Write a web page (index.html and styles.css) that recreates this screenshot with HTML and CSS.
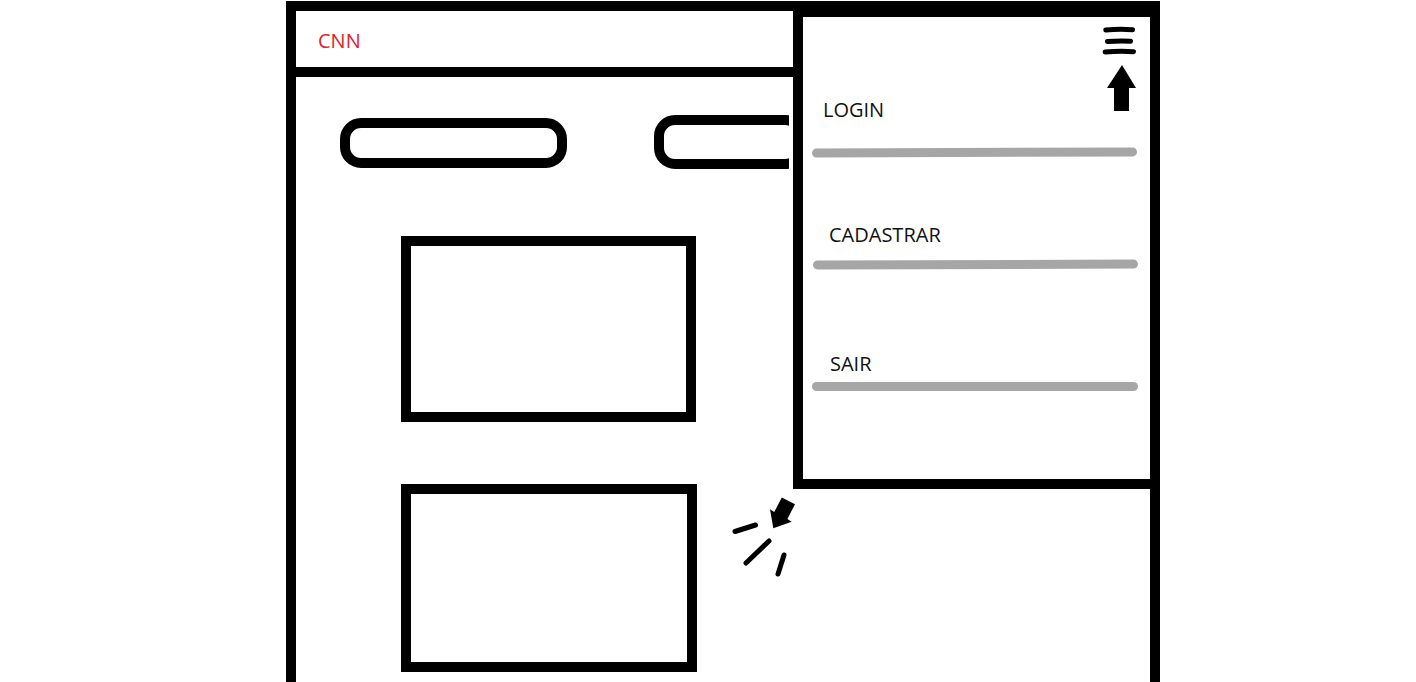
FILE: index.html
```html
<!DOCTYPE html>
<html lang="pt">
<head>
<meta charset="utf-8">
<title>Wireframe</title>
<link rel="stylesheet" href="styles.css">
</head>
<body>
  <div class="frame">
    <header class="topbar"><span class="brand">CNN</span></header>
    <main class="content">
      <div class="pill-row">
        <div class="pill pill-a"></div>
        <div class="pill-clip"><div class="pill pill-b"></div></div>
      </div>
      <div class="box box-a"></div>
      <div class="box box-b"></div>
    </main>
  </div>

  <aside class="menu">
    <svg class="menu-icon" width="36" height="88" viewBox="0 0 36 88">
      <g fill="none" stroke="#000" stroke-width="5" stroke-linecap="round">
        <path d="M3.8 5 Q18 3.8 30.5 4.8"/>
        <path d="M5.5 16.6 Q18 15.4 28.5 16.2"/>
        <path d="M3.2 27 Q18 25.8 31.5 26.7"/>
      </g>
      <polygon points="20,40 34,63 27,63 27,86 12,86 12,63 5,63" fill="#000"/>
    </svg>
    <div class="menu-item item-login">
      <div class="menu-label">LOGIN</div>
      <div class="menu-rule"></div>
    </div>
    <div class="menu-item item-cad">
      <div class="menu-label">CADASTRAR</div>
      <div class="menu-rule"></div>
    </div>
    <div class="menu-item item-sair">
      <div class="menu-label">SAIR</div>
      <div class="menu-rule"></div>
    </div>
  </aside>

  <svg class="burst" width="75" height="90" viewBox="0 0 75 90">
    <polygon points="56.8,2.4 70,9.2 62.4,23.9 66.7,26.7 48.3,33.3 45,14.3 49.2,17.1" fill="#000"/>
    <g fill="none" stroke="#000" stroke-width="5" stroke-linecap="round">
      <line x1="10" y1="36.5" x2="30.5" y2="30"/>
      <line x1="21" y1="68" x2="44" y2="46"/>
      <line x1="53" y1="79" x2="59" y2="60"/>
    </g>
  </svg>
</body>
</html>
```
FILE: styles.css
```css
html, body {
  margin: 0;
  padding: 0;
  background: #fff;
}
body {
  position: relative;
  width: 1416px;
  height: 682px;
  overflow: hidden;
  font-family: "Open Sans", "Liberation Sans", sans-serif;
}
.frame {
  box-sizing: border-box;
  margin: 1px 0 0 286px;
  width: 874px;
  height: 681px;
  border: 10px solid #000;
  border-bottom: none;
}
.topbar {
  box-sizing: content-box;
  height: 40px;
  padding: 16px 0 0 22px;
  border-bottom: 10px solid #000;
}
.brand {
  display: block;
  font-size: 20px;
  line-height: 27px;
  color: #e5222b;
}
.content {
  display: flex;
  flex-direction: column;
  align-items: flex-start;
}
.pill-row {
  display: flex;
  align-items: flex-start;
  gap: 87px;
  height: 50px;
  margin: 41px 0 0 44px;
}
.pill {
  box-sizing: border-box;
  border: 10px solid #000;
  border-radius: 21px;
}
.pill-a {
  width: 227px;
  height: 50px;
}
.pill-clip {
  width: 135px;
  margin-top: -3px;
  overflow: hidden;
}
.pill-b {
  width: 152px;
  height: 54px;
}
.box {
  box-sizing: border-box;
  border: 10px solid #000;
  margin-left: 105px;
}
.box-a {
  width: 295px;
  height: 186px;
  margin-top: 68px;
}
.box-b {
  width: 296px;
  height: 188px;
  margin-top: 62px;
}
.menu {
  position: absolute;
  left: 793px;
  top: 7px;
  box-sizing: border-box;
  width: 367px;
  height: 482px;
  border: 10px solid #000;
  background: #fff;
}
.menu-icon {
  float: right;
  display: block;
  margin: 8px 12px 0 0;
}
.menu-label {
  font-size: 20px;
  line-height: 27px;
  color: #111;
}
.menu-rule {
  height: 9px;
  border-radius: 5px;
  background: #a6a6a6;
}
.item-login { margin-top: 79px; }
.item-login .menu-label { padding-left: 20px; }
.item-login .menu-rule {
  width: 325px;
  margin: 25px 0 0 9px;
  transform: rotate(-0.2deg);
}
.item-cad { margin-top: 64px; }
.item-cad .menu-label { padding-left: 26px; }
.item-cad .menu-rule {
  width: 325px;
  margin: 12px 0 0 10px;
  transform: rotate(-0.15deg);
}
.item-sair { margin-top: 81px; }
.item-sair .menu-label { padding-left: 27px; }
.item-sair .menu-rule {
  width: 326px;
  margin: 5px 0 0 9px;
}
.burst {
  position: absolute;
  left: 725px;
  top: 495px;
}
```
